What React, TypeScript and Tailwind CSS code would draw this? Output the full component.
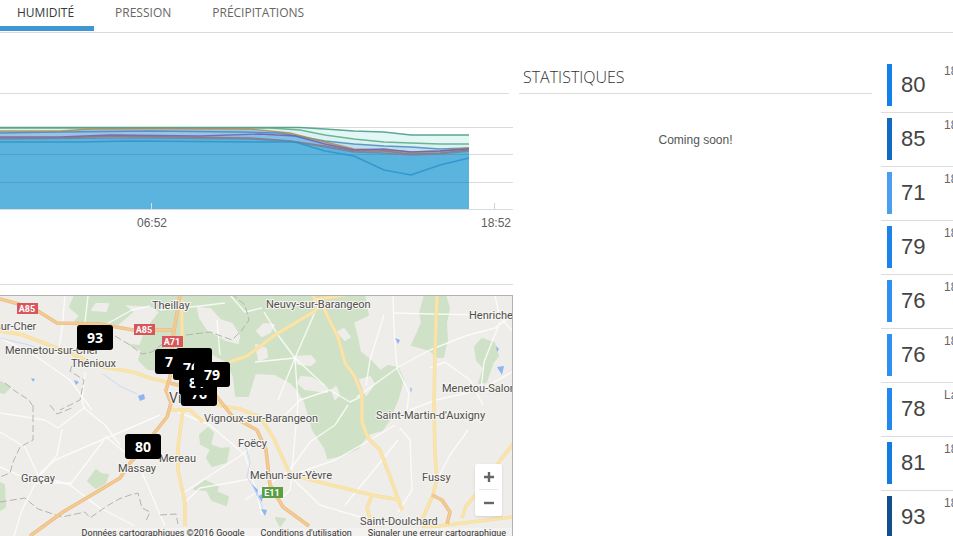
import { clsx } from "clsx";

/**
 * Weather station dashboard: humidity tab with the 24h chart, the
 * station map and the list of latest readings.
 */

const TABS = [
  { id: "humidity", label: "HUMIDITÉ", active: true },
  { id: "pressure", label: "PRESSION", active: false },
  { id: "rain", label: "PRÉCIPITATIONS", active: false },
];

interface Reading {
  id: number;
  value: number;
  time: string;
  bar: string;
}

const READINGS: Reading[] = [
  { id: 1, value: 80, time: "18", bar: "bg-[#1280ea]" },
  { id: 2, value: 85, time: "18", bar: "bg-[#1169c4]" },
  { id: 3, value: 71, time: "18", bar: "bg-[#4a9ff0]" },
  { id: 4, value: 79, time: "18", bar: "bg-[#1a84ea]" },
  { id: 5, value: 76, time: "18", bar: "bg-[#2e90f0]" },
  { id: 6, value: 76, time: "18", bar: "bg-[#2e90f0]" },
  { id: 7, value: 78, time: "La", bar: "bg-[#2088ee]" },
  { id: 8, value: 81, time: "18", bar: "bg-[#127ce0]" },
  { id: 9, value: 93, time: "18", bar: "bg-[#0f4f8c]" },
];

const SERIES = [
  { stroke: "#3f9a7c", fill: "#e3f8f6", d: "M0 127.5 H300 L325 129 L354 131 L384 132 L411 135 H469" },
  { stroke: "#5aa883", fill: "#d8f3f1", d: "M0 128 H270 L300 130 L325 135 L354 139 L384 142 L411 143 L440 144 H469" },
  { stroke: "#4f88b8", fill: "#bfe0f0", d: "M0 133 L60 132 L150 131 L240 132 L280 133 L325 141 L354 144 L384 146 L411 147 L440 149 L469 148" },
  { stroke: "#b58a4e", fill: "#98c4e6", d: "M0 131 L60 131 L90 129 L150 128.5 L250 129 L290 133 L325 142 L354 149 L384 150 L411 152 L440 151 L469 148" },
  { stroke: "#6a62b0", fill: "#80bfe6", d: "M0 137 L60 137 L110 135 L200 136 L260 134 L295 136 L325 144 L354 150 L384 149 L411 152 L440 151 L469 149" },
  { stroke: "#a06a78", fill: "#7dbde2", d: "M0 138 L60 138 L110 136 L180 137 L250 138 L290 141 L325 146 L354 151 L384 151 L411 154 L440 153 L469 150" },
  { stroke: "#71869c", fill: "#5bb4de", d: "M0 139 L100 138 L160 138 L250 139 L290 141 L325 147 L354 152 L384 153 L411 155 L440 154 L469 151" },
  { stroke: "#2c93cb", fill: "#5bb4de", d: "M0 142 L80 142 L130 141 L255 142 L295 142 L325 151 L354 156 L384 170 L411 175 L440 165 L469 158" },
];

const GREEN_AREAS = [
  "M75 295 L70 307 L80 316 L74 323 L100 322 L118 324 L132 312 L122 304 L152 306 L160 312 L146 330 L140 346 L130 345 L142 350 L139 360 L148 369 L175 372 L205 350 L228 362 L234 378 L236 396 L248 396 L255 373 L275 374 L290 382 L298 390 L305 402 L313 430 L325 448 L328 458 L342 455 L358 448 L368 434 L382 430 L389 420 L398 398 L403 380 L398 368 L388 366 L380 371 L370 360 L360 352 L357 337 L353 322 L368 315 L364 295 Z",
  "M425 295 L420 313 L422 322 L418 332 L412 345 L430 350 L437 357 L443 357 L447 340 L446 323 L449 308 L445 295 Z",
  "M482 339 L475 347 L477 360 L484 368 L479 383 L486 382 L493 362 L498 356 L494 343 Z",
  "M200 435 L208 428 L213 433 L210 445 L221 449 L229 448 L226 462 L212 466 L207 458 L211 449 L201 444 Z",
  "M194 489 L205 481 L218 487 L216 492 L228 497 L226 505 L212 500 L207 490 Z",
  "M88 481 L96 470 L101 474 L108 475 L105 483 L96 488 Z",
  "M0 483 L4 485 L5 507 L0 510 Z",
  "M0 382 L10 387 L4 393 L0 392 Z",
  "M276 518 L285 519 L280 526 Z",
];

const CLEARINGS = [
  "M198 308 L210 309 L220 320 L232 324 L239 336 L238 343 L226 340 L208 330 L200 318 Z",
  "M92 310 L96 304 L108 304 L106 311 Z",
  "M257 331 L264 324 L274 325 L270 332 L262 336 Z",
  "M338 332 L344 329 L350 337 L345 340 Z",
  "M256 345 L266 349 L267 357 L259 360 Z",
  "M294 357 L311 356 L315 361 L311 365 L298 364 Z",
  "M301 377 L312 378 L327 388 L327 392 L305 389 L298 383 Z",
  "M360 380 L370 377 L374 384 L366 395 Z",
  "M332 390 L336 387 L339 395 L335 399 Z",
];

const WHITE_ROADS = [
  "M65 295 L62 330 L58 354",
  "M88 296 L85 322",
  "M0 338 L34 355 L70 380 L92 410",
  "M105 325 L132 310 L150 306",
  "M0 432 L25 447 L38 475 L70 485 L100 508 L135 526",
  "M85 372 L82 400 L84 408 L105 425 L120 445",
  "M0 413 L45 420 L58 428 L62 425 L85 407",
  "M62 429 L57 455 L38 478 L22 510 L14 536",
  "M38 475 L55 460 L104 439 L130 428 L160 415",
  "M70 485 L85 465 L104 440",
  "M105 436 L128 455",
  "M140 468 L165 526",
  "M0 467 L37 483 H72",
  "M178 412 L210 425 L245 455 L256 490 L262 515",
  "M180 495 L240 456 L260 440",
  "M185 502 L200 488 L256 478",
  "M264 312 L278 335 L295 358 L325 386",
  "M315 312 L295 358 L278 400",
  "M255 362 L295 358",
  "M295 358 L298 403 L292 470",
  "M357 397 L400 366 L430 350 L465 336 L495 328 L512 316",
  "M393 295 L394 330 L397 368 L409 393 L407 410",
  "M384 315 L370 360 L366 385",
  "M500 322 L484 362 L481 390",
  "M362 396 L350 402 L330 390 L300 400 L285 415",
  "M348 405 L335 425 L310 442 L290 470 L245 500",
  "M395 425 L370 440 L335 460 L292 475 L290 490 L280 500",
  "M400 428 L410 440 L412 490 L398 512",
  "M398 440 L378 465 L345 505",
  "M468 430 L450 455 L437 480",
  "M292 478 L320 505 L370 520",
  "M393 313 L433 314 L490 315",
  "M495 296 L500 318 L512 330",
  "M410 410 L436 400 L480 390 L512 372",
  "M430 368 L445 362 L470 380 L483 405",
  "M160 310 L200 306 L225 303",
  "M217 320 L220 355",
  "M230 295 L245 312 L262 308",
];

const YELLOW_ROADS = [
  "M0 331 L23 335 L67 352 L103 367 L133 372 L150 378 L170 383",
  "M210 372 L232 361 L247 356 L275 335 L315 311 L322 297",
  "M182 300 V350",
  "M313 300 L345 295",
  "M312 295 L323 307 L338 337 L345 363 L355 377 L362 395 L362 422 L368 438 L380 450 L392 482 L402 510",
  "M437 295 L435 350 L434 405 L435 455 L437 478 L433 495 L421 522",
  "M183 410 L178 447 L178 470 L185 503 L185 526",
  "M171 410 L190 410 L203 422",
  "M217 405 L240 409 L260 417 L273 437 L290 474 L315 481 L372 495 L400 500",
  "M372 495 L367 508 L370 519",
  "M422 528 L512 517",
  "M462 518 L466 506 L478 492 L502 458 L513 444",
];

const MOTORWAYS = [
  "M0 299 L33 308 L57 323 L100 324 L133 330 L172 330",
  "M180 295 L173 337 L170 377 L166 390 L171 403 L167 417 L155 432 L140 452 L130 463 L120 478 L100 490 L63 512 L30 536",
  "M170 383 L190 388 L217 397 L233 417 L257 430 L266 450 L270 485 L283 507 L309 526",
  "M432 495 L442 500 L450 512 L447 524",
];

const WATER = [
  "M138 396 L144 394 L145 399 L140 401 Z",
  "M74 380 L79 382 L76 385 Z",
  "M31 378 L35 379 L33 382 Z",
  "M395 338 L400 340 L398 344 Z",
  "M496 346 L499 349 L497 352 Z",
  "M497 367 L504 366 L502 375 Z",
  "M410 387 L412 389 L411 393 Z",
  "M252 484 L258 490 L257 496 Z",
  "M258 496 L263 494 L262 502 Z",
  "M261 509 L267 510 L265 516 Z",
];

const PLACES = [
  { name: "Theillay", x: 152, y: 309 },
  { name: "Neuvy-sur-Barangeon", x: 266, y: 308 },
  { name: "Henriche", x: 469, y: 319 },
  { name: "sur-Cher", x: -5, y: 330 },
  { name: "Mennetou-sur-Cher", x: 5, y: 354 },
  { name: "Thénioux", x: 71, y: 367 },
  { name: "Menetou-Salon", x: 442, y: 392 },
  { name: "Saint-Martin-d'Auxigny", x: 376, y: 419 },
  { name: "Vignoux-sur-Barangeon", x: 204, y: 422 },
  { name: "Foëcy", x: 238, y: 447 },
  { name: "Mereau", x: 159, y: 462 },
  { name: "Massay", x: 118, y: 472 },
  { name: "Graçay", x: 21, y: 482 },
  { name: "Mehun-sur-Yèvre", x: 250, y: 479 },
  { name: "Fussy", x: 422, y: 481 },
  { name: "Saint-Doulchard", x: 360, y: 525 },
];

const SHIELDS = [
  { name: "A85", x: 17, y: 303, fill: "#d6565c" },
  { name: "A85", x: 134, y: 324, fill: "#d6565c" },
  { name: "A71", x: 162, y: 336, fill: "#d6565c" },
  { name: "E11", x: 262, y: 487, fill: "#5a9e46" },
];

// Later pins are drawn over earlier ones.
const PINS = [
  { value: 93, x: 77, y: 325 },
  { value: 79, x: 155, y: 349 },
  { value: 76, x: 176, y: 348 },
  { value: 76, x: 173, y: 355 },
  { value: 76, x: 181, y: 381 },
  { value: 81, x: 179, y: 370 },
  { value: 79, x: 194, y: 362 },
  { value: 80, x: 125, y: 434 },
];

const MAP = { x: 0, y: 296, width: 512, height: 240 };

function Tabs() {
  return (
    <nav className="flex h-[33px] shrink-0 border-b border-[#d9dadc] font-['Open_Sans',sans-serif] text-xs">
      {TABS.map((t) => (
        <button
          key={t.id}
          type="button"
          className={clsx(
            "h-[31px] border-b-[5px] pr-5 pb-px whitespace-nowrap",
            t.active
              ? "border-[#3f96d2] pl-[17px] text-[#333a40]"
              : "border-transparent pl-[21px] text-[#666]"
          )}
        >
          {t.label}
        </button>
      ))}
    </nav>
  );
}

function HumidityChart() {
  return (
    <svg viewBox="0 110 513 130" className="block h-auto w-full" role="img" aria-label="Humidité">
      {SERIES.map((s) => (
        <path key={s.d} d={`${s.d} V209 H0 Z`} fill={s.fill} />
      ))}
      <g stroke="#33526b" strokeOpacity="0.2">
        <path d="M0 127.5 H513 M0 154.5 H513 M0 182.5 H513 M0 209.5 H513" />
      </g>
      {SERIES.map((s) => (
        <path key={s.d} d={s.d} fill="none" stroke={s.stroke} strokeWidth="1.4" strokeOpacity="0.85" />
      ))}
      <path d="M151.5 203 V209" stroke="#c5e4f2" />
      <path d="M494.5 203 V209" stroke="#d5d5d5" />
      <g className="font-['Liberation_Sans',sans-serif] text-xs" fill="#606060">
        <text x="137" y="227">06:52</text>
        <text x="481" y="227">18:52</text>
      </g>
    </svg>
  );
}

function StationMap() {
  return (
    <div className="relative min-h-0 flex-1 overflow-hidden border-t border-r border-[#b3b3b3] bg-[#efedea]">
      <svg
        viewBox="0 296 512 240"
        preserveAspectRatio="xMinYMin slice"
        className="block h-full w-full font-['Roboto',sans-serif]"
      >
        <g fill="#cfe2c7" stroke="#cfe2c7" strokeWidth="2" strokeLinejoin="round">
          {GREEN_AREAS.map((d) => (
            <path key={d} d={d} />
          ))}
        </g>
        <g fill="#efedea" stroke="#efedea" strokeWidth="2" strokeLinejoin="round">
          {CLEARINGS.map((d) => (
            <path key={d} d={d} />
          ))}
        </g>
        <g fill="none" stroke="#fdfdfc" strokeWidth="1.4" strokeLinejoin="round" strokeOpacity="0.85">
          {WHITE_ROADS.map((d) => (
            <path key={d} d={d} />
          ))}
        </g>
        <g fill="none" stroke="#b4b4ae" strokeDasharray="7 3">
          <path d="M33 405 L33 440 L20 447 L13 462 L10 473 L0 477" />
          <path d="M0 502 L25 498 L38 509 L62 517 L85 512 L90 518 L107 506 L119 499 L130 495 L138 493 L142 508 L150 512 L145 523" />
          <path d="M50 405 L57 414 L72 408 M160 515 L176 514 L178 524" />
          <path d="M5 383 L15 391 L29 400 L32 405 M72 366 L70 371 L84 380 L80 400 L60 410" />
          <path d="M115 336 L130 345 L142 354 L152 352 L165 342" />
          <path d="M186 335 L210 332 L232 340 L242 330 L249 320 L245 305 L233 295" />
        </g>
        <g fill="#8db4f3">
          {WATER.map((d) => (
            <path key={d} d={d} />
          ))}
        </g>
        <g fill="none" stroke="#c8daf5">
          <path d="M0 338 L25 344 L45 350" />
          <path d="M103 374 L120 386 L137 394" />
          <path d="M246 447 L250 462 L247 477 L256 492 L263 508" />
        </g>
        <g fill="none" stroke="#f3dda8" strokeWidth="3.6" strokeLinejoin="round">
          {YELLOW_ROADS.map((d) => (
            <path key={d} d={d} />
          ))}
        </g>
        <g fill="none" stroke="#fbe4a8" strokeWidth="2.4" strokeLinejoin="round">
          {YELLOW_ROADS.map((d) => (
            <path key={d} d={d} />
          ))}
        </g>
        <g fill="none" stroke="#e9bd85" strokeWidth="3.6" strokeLinejoin="round">
          {MOTORWAYS.map((d) => (
            <path key={d} d={d} />
          ))}
        </g>
        <g fill="none" stroke="#f6cb92" strokeWidth="2" strokeLinejoin="round">
          {MOTORWAYS.map((d) => (
            <path key={d} d={d} />
          ))}
        </g>
        {SHIELDS.map((s) => (
          <g key={`${s.x}-${s.y}`}>
            <rect x={s.x} y={s.y} width="21" height="11" fill={s.fill} />
            <text x={s.x + 10} y={s.y + 9} textAnchor="middle" fill="#fff" className="text-[9px] font-bold">
              {s.name}
            </text>
          </g>
        ))}
        <g fill="#4f4f4d" stroke="#f6f5f2" strokeWidth="2" paintOrder="stroke" className="text-[11px]">
          {PLACES.map((p) => (
            <text key={p.name} x={p.x} y={p.y}>
              {p.name}
            </text>
          ))}
          <text x="169" y="403" className="text-sm">
            Vi
          </text>
        </g>
      </svg>

      {PINS.map((p) => (
        <button
          key={`${p.x}-${p.y}`}
          type="button"
          className="absolute h-[25px] w-9 rounded-[3px] bg-black text-center font-['Open_Sans',sans-serif] text-sm leading-6 font-bold text-white"
          style={{
            left: `${((p.x - MAP.x) / MAP.width) * 100}%`,
            top: `${((p.y - MAP.y) / MAP.height) * 100}%`,
          }}
        >
          {p.value}
        </button>
      ))}

      <div className="absolute right-[10px] bottom-5 w-[27px] divide-y divide-[#e6e6e6] rounded-[2px] bg-white px-1 shadow">
        <button type="button" aria-label="Zoom avant" className="flex h-[26px] w-full items-center justify-center">
          <svg viewBox="0 0 10 10" className="h-[10px] w-[10px]">
            <path d="M5 0 V10 M0 5 H10" stroke="#666" strokeWidth="2.4" />
          </svg>
        </button>
        <button type="button" aria-label="Zoom arrière" className="flex h-[26px] w-full items-center justify-center">
          <svg viewBox="0 0 10 10" className="h-[10px] w-[10px]">
            <path d="M0 5 H10" stroke="#666" strokeWidth="2.4" />
          </svg>
        </button>
      </div>

      <div className="absolute right-0 bottom-0 flex h-2 gap-4 bg-[#f5f4f2]/70 pr-1.5 font-['Roboto',sans-serif] text-[9px] leading-[10px] whitespace-nowrap text-[#333]">
        <span>Données cartographiques ©2016 Google</span>
        <a href="#conditions">Conditions d'utilisation</a>
        <a href="#signaler">Signaler une erreur cartographique</a>
      </div>
    </div>
  );
}

function Statistics() {
  return (
    <section className="mr-[9px] ml-1.5 min-w-0 flex-[353] pt-[30px]">
      <h2 className="h-[31px] border-b border-[#dcdcdc] pl-1 font-['Open_Sans',sans-serif] text-base leading-7 font-light text-[#333]">
        STATISTIQUES
      </h2>
      <p className="pt-9 text-center text-xs leading-5 text-[#555]">Coming soon!</p>
    </section>
  );
}

function ReadingRow({ reading }: { reading: Reading }) {
  return (
    <li className="flex h-[54px] border-b border-[#dcdcdc] pt-[5px] pl-1.5">
      <span className={clsx("h-[42px] w-[5px] shrink-0", reading.bar)} />
      <span className="w-[52px] shrink-0 pl-[9px] text-[22px] leading-[42px] text-[#444]">
        {reading.value}
      </span>
      <span className="text-xs leading-[14px] text-[#666]">{reading.time}</span>
    </li>
  );
}

export default function App() {
  return (
    <div className="flex h-screen flex-col overflow-hidden bg-white font-['Liberation_Sans',Arial,sans-serif]">
      <Tabs />
      <main className="flex min-h-0 flex-1">
        <div className="flex min-w-0 flex-[513] flex-col">
          <div className="mr-1 h-[61px] shrink-0 border-b border-[#dcdcdc]" />
          <div className="shrink-0 pt-4">
            <HumidityChart />
          </div>
          <div className="mb-[10px] h-[45px] shrink-0 border-b border-[#dcdcdc]" />
          <StationMap />
        </div>
        <Statistics />
        <ul className="w-[72px] shrink-0 overflow-hidden pt-[26px]">
          {READINGS.map((r) => (
            <ReadingRow key={r.id} reading={r} />
          ))}
        </ul>
      </main>
    </div>
  );
}
